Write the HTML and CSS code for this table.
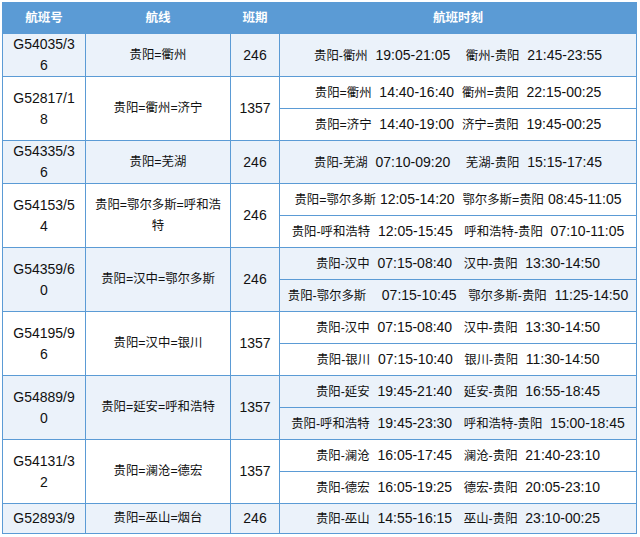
FILE: index.html
```html
<!DOCTYPE html>
<html lang="zh">
<head>
<meta charset="utf-8">
<title>航班时刻</title>
<link rel="stylesheet" href="styles.css">
</head>
<body>
<div class="page">
<table class="sched">
  <colgroup>
    <col class="w-code"><col class="w-route"><col class="w-days"><col class="w-times">
  </colgroup>
  <thead>
    <tr><th>航班号</th><th>航线</th><th>班期</th><th>航班时刻</th></tr>
  </thead>
  <tbody class="alt">
    <tr>
      <td class="code">G54035/36</td>
      <td class="route">贵阳=衢州</td>
      <td class="days">246</td>
      <td class="times"><span class="c">贵阳-衢州</span>  19:05-21:05    <span class="c">衢州-贵阳</span>  21:45-23:55</td>
    </tr>
  </tbody>
  <tbody>
    <tr>
      <td class="code" rowspan="2">G52817/18</td>
      <td class="route" rowspan="2">贵阳=衢州=济宁</td>
      <td class="days" rowspan="2">1357</td>
      <td class="times"><span class="c">贵阳=衢州</span>  14:40-16:40  <span class="c">衢州=贵阳</span>  22:15-00:25</td>
    </tr>
    <tr>
      <td class="times"><span class="c">贵阳=济宁</span>  14:40-19:00  <span class="c">济宁=贵阳</span>  19:45-00:25</td>
    </tr>
  </tbody>
  <tbody class="alt">
    <tr>
      <td class="code">G54335/36</td>
      <td class="route">贵阳=芜湖</td>
      <td class="days">246</td>
      <td class="times"><span class="c">贵阳-芜湖</span>  07:10-09:20    <span class="c">芜湖-贵阳</span>  15:15-17:45</td>
    </tr>
  </tbody>
  <tbody>
    <tr>
      <td class="code" rowspan="2">G54153/54</td>
      <td class="route" rowspan="2">贵阳=鄂尔多斯=呼和浩特</td>
      <td class="days" rowspan="2">246</td>
      <td class="times"><span class="c">贵阳=鄂尔多斯</span> 12:05-14:20  <span class="c">鄂尔多斯=贵阳</span> 08:45-11:05</td>
    </tr>
    <tr>
      <td class="times"><span class="c">贵阳-呼和浩特</span>  12:05-15:45   <span class="c">呼和浩特-贵阳</span>  07:10-11:05</td>
    </tr>
  </tbody>
  <tbody class="alt">
    <tr>
      <td class="code" rowspan="2">G54359/60</td>
      <td class="route" rowspan="2">贵阳=汉中=鄂尔多斯</td>
      <td class="days" rowspan="2">246</td>
      <td class="times"><span class="c">贵阳-汉中</span>  07:15-08:40   <span class="c">汉中-贵阳</span>  13:30-14:50</td>
    </tr>
    <tr>
      <td class="times"><span class="c">贵阳-鄂尔多斯</span>    07:15-10:45   <span class="c">鄂尔多斯-贵阳</span>  11:25-14:50</td>
    </tr>
  </tbody>
  <tbody>
    <tr>
      <td class="code" rowspan="2">G54195/96</td>
      <td class="route" rowspan="2">贵阳=汉中=银川</td>
      <td class="days" rowspan="2">1357</td>
      <td class="times"><span class="c">贵阳-汉中</span>  07:15-08:40   <span class="c">汉中-贵阳</span>  13:30-14:50</td>
    </tr>
    <tr>
      <td class="times"><span class="c">贵阳-银川</span>  07:15-10:40   <span class="c">银川-贵阳</span>  11:30-14:50</td>
    </tr>
  </tbody>
  <tbody class="alt">
    <tr>
      <td class="code" rowspan="2">G54889/90</td>
      <td class="route" rowspan="2">贵阳=延安=呼和浩特</td>
      <td class="days" rowspan="2">1357</td>
      <td class="times"><span class="c">贵阳-延安</span>  19:45-21:40   <span class="c">延安-贵阳</span>  16:55-18:45</td>
    </tr>
    <tr>
      <td class="times"><span class="c">贵阳-呼和浩特</span>  19:45-23:30   <span class="c">呼和浩特-贵阳</span>  15:00-18:45</td>
    </tr>
  </tbody>
  <tbody>
    <tr>
      <td class="code" rowspan="2">G54131/32</td>
      <td class="route" rowspan="2">贵阳=澜沧=德宏</td>
      <td class="days" rowspan="2">1357</td>
      <td class="times"><span class="c">贵阳-澜沧</span>  16:05-17:45   <span class="c">澜沧-贵阳</span>  21:40-23:10</td>
    </tr>
    <tr>
      <td class="times"><span class="c">贵阳-德宏</span>  16:05-19:25   <span class="c">德宏-贵阳</span>  20:05-23:10</td>
    </tr>
  </tbody>
  <tbody class="alt last">
    <tr>
      <td class="code">G52893/9</td>
      <td class="route">贵阳=巫山=烟台</td>
      <td class="days">246</td>
      <td class="times"><span class="c">贵阳-巫山</span>  14:55-16:15   <span class="c">巫山-贵阳</span>  23:10-00:25</td>
    </tr>
  </tbody>
</table>
</div>
</body>
</html>
```

FILE: styles.css
```css
html, body {
  margin: 0;
  padding: 0;
  background: #ffffff;
}

.page {
  padding: 2px;
}

.sched {
  border-collapse: collapse;
  table-layout: fixed;
  width: 634px;
  font-family: "Liberation Sans", "Noto Sans CJK SC", sans-serif;
  font-size: 14px;
  color: #111111;
}

.w-code { width: 83px; }
.w-route { width: 145px; }
.w-days { width: 49px; }
.w-times { width: 357px; }

.sched th,
.sched td {
  border: 1px solid #5b9bd5;
  text-align: center;
  vertical-align: middle;
  line-height: 21px;
}

.sched th {
  background: #5b9bd5;
  color: #ffffff;
  font-size: 12.5px;
  font-weight: bold;
  height: 30px;
  padding: 0;
}

.sched tbody.alt td {
  background: #ebf2fa;
}

.code {
  padding: 0 8px;
  word-break: break-all;
}

.route {
  font-size: 12.4px;
  padding: 0 8px;
}

.days {
  padding: 0 2px;
}

.times {
  padding: 5px 2px;
  white-space: pre;
}

.sched tbody.last .times {
  padding: 4px 2px;
}

.c {
  font-size: 12.4px;
  line-height: 14px;
}
```
